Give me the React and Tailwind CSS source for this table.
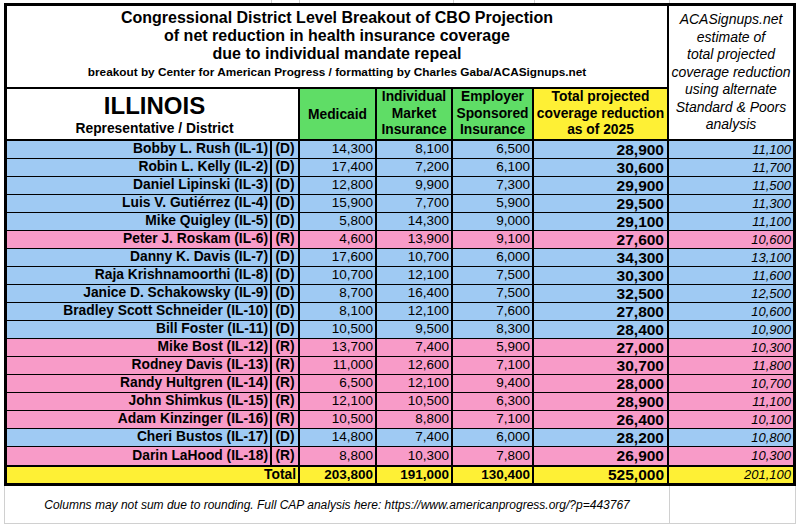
import React from "react";

const rows = [
  ["Bobby L. Rush (IL-1)", "D", "14,300", "8,100", "6,500", "28,900", "11,100"],
  ["Robin L. Kelly (IL-2)", "D", "17,400", "7,200", "6,100", "30,600", "11,700"],
  ["Daniel Lipinski (IL-3)", "D", "12,800", "9,900", "7,300", "29,900", "11,500"],
  ["Luis V. Gutiérrez (IL-4)", "D", "15,900", "7,700", "5,900", "29,500", "11,300"],
  ["Mike Quigley (IL-5)", "D", "5,800", "14,300", "9,000", "29,100", "11,100"],
  ["Peter J. Roskam (IL-6)", "R", "4,600", "13,900", "9,100", "27,600", "10,600"],
  ["Danny K. Davis (IL-7)", "D", "17,600", "10,700", "6,000", "34,300", "13,100"],
  ["Raja Krishnamoorthi (IL-8)", "D", "10,700", "12,100", "7,500", "30,300", "11,600"],
  ["Janice D. Schakowsky (IL-9)", "D", "8,700", "16,400", "7,500", "32,500", "12,500"],
  ["Bradley Scott Schneider (IL-10)", "D", "8,100", "12,100", "7,600", "27,800", "10,600"],
  ["Bill Foster (IL-11)", "D", "10,500", "9,500", "8,300", "28,400", "10,900"],
  ["Mike Bost (IL-12)", "R", "13,700", "7,400", "5,900", "27,000", "10,300"],
  ["Rodney Davis (IL-13)", "R", "11,000", "12,600", "7,100", "30,700", "11,800"],
  ["Randy Hultgren (IL-14)", "R", "6,500", "12,100", "9,400", "28,000", "10,700"],
  ["John Shimkus (IL-15)", "R", "12,100", "10,500", "6,300", "28,900", "11,100"],
  ["Adam Kinzinger (IL-16)", "R", "10,500", "8,800", "7,100", "26,400", "10,100"],
  ["Cheri Bustos (IL-17)", "D", "14,800", "7,400", "6,000", "28,200", "10,800"],
  ["Darin LaHood (IL-18)", "R", "8,800", "10,300", "7,800", "26,900", "10,300"],
];

function DataRow({ r, last }) {
  const bg = r[1] === "D" ? "bg-[#9fcaf3]" : "bg-[#f89bc8]";
  return (
    <div className={`flex h-[18px] ${last ? "h-[17px]" : "border-b border-black"} ${bg}`}>
      <div className="w-[265px] border-r-2 border-black flex items-center justify-end pr-[2px] font-bold text-[13.8px] whitespace-nowrap">
        {r[0]}
      </div>
      <div className="w-[28px] border-r-2 border-black flex items-center justify-center font-bold text-[13.8px]">
        ({r[1]})
      </div>
      <div className="w-[77px] border-r-2 border-black flex items-center justify-end pr-[2px] text-[13.5px]">
        {r[2]}
      </div>
      <div className="w-[76px] border-r-2 border-black flex items-center justify-end pr-[2px] text-[13.5px]">
        {r[3]}
      </div>
      <div className="w-[81px] border-r-2 border-black flex items-center justify-end pr-[2px] text-[13.5px]">
        {r[4]}
      </div>
      <div className="w-[135px] border-r-2 border-black flex items-center justify-end pr-[3px] font-bold text-[15.5px]">
        {r[5]}
      </div>
      <div className="flex-1 flex items-center justify-end pr-[2px] italic text-[13px]">
        {r[6]}
      </div>
    </div>
  );
}

export default function App() {
  return (
    <div className="w-[802px] h-[525px] bg-white text-black font-['Liberation_Sans',Arial,sans-serif] overflow-hidden">
      {/* top gridline strip */}
      <div className="flex h-[3px] ml-[4px] w-[792px]">
        <div className="w-[268px] border-r border-[#d0d0d0]" />
        <div className="w-[28px] border-r border-[#d0d0d0]" />
        <div className="w-[154px] border-r border-[#d0d0d0]" />
        <div className="w-[81px] border-r border-[#d0d0d0]" />
        <div className="w-[135px] border-r border-[#d0d0d0]" />
        <div className="flex-1" />
      </div>

      <div className="ml-[4px] w-[792px] border-[3px] border-black">
        {/* header block */}
        <div className="flex">
          <div className="w-[662px] flex flex-col">
            <div className="h-[83px] border-b-2 border-r-2 border-black flex flex-col items-center pt-[3px]">
              <div className="font-bold text-[16px] leading-[18px] text-center">
                <div>Congressional District Level Breakout of CBO Projection</div>
                <div>of net reduction in health insurance coverage</div>
                <div>due to individual mandate repeal</div>
              </div>
              <div className="font-bold text-[11.8px] leading-[14px] mt-[2px] text-center whitespace-nowrap">
                breakout by Center for American Progress / formatting by Charles Gaba/ACASignups.net
              </div>
            </div>
            <div className="h-[50px] flex">
              <div className="w-[293px] border-r-2 border-black flex flex-col items-center justify-center pl-[4px]">
                <div className="font-bold text-[24px] leading-[26px] pt-[2px]">ILLINOIS</div>
                <div className="font-bold text-[13.8px] leading-[16px] mt-[2px]">Representative / District</div>
              </div>
              <div className="w-[77px] border-r-2 border-black bg-[#5fdd66] flex items-center justify-center font-bold text-[13.8px] pt-[2px]">
                Medicaid
              </div>
              <div className="w-[76px] border-r-2 border-black bg-[#5fdd66] flex items-center justify-center text-center font-bold text-[13.8px] leading-[16.5px]">
                Individual<br />Market<br />Insurance
              </div>
              <div className="w-[81px] border-r-2 border-black bg-[#5fdd66] flex items-center justify-center text-center font-bold text-[13.8px] leading-[16.5px]">
                Employer<br />Sponsored<br />Insurance
              </div>
              <div className="w-[135px] border-r-2 border-black bg-[#fef035] flex items-center justify-center text-center font-bold text-[13.8px] leading-[16.5px] whitespace-nowrap">
                Total projected<br />coverage reduction<br />as of 2025
              </div>
            </div>
          </div>
          <div className="flex-1 h-[133px] flex items-center justify-center text-center italic text-[14px] leading-[17.5px] whitespace-nowrap">
            <div>
              ACASignups.net<br />estimate of<br />total projected<br />coverage reduction<br />using alternate<br />Standard &amp; Poors<br />analysis
            </div>
          </div>
        </div>

        {/* data */}
        <div className="border-t-2 border-black">
          {rows.map((r, i) => (
            <DataRow key={i} r={r} last={i === rows.length - 1} />
          ))}
        </div>

        {/* total */}
        <div className="flex h-[18px] border-t-2 border-black bg-[#fef035]">
          <div className="w-[293px] border-r-2 border-black flex items-center justify-end pr-[2px] font-bold text-[13.8px]">
            Total
          </div>
          <div className="w-[77px] border-r-2 border-black flex items-center justify-end pr-[2px] font-bold text-[13.5px]">
            203,800
          </div>
          <div className="w-[76px] border-r-2 border-black flex items-center justify-end pr-[2px] font-bold text-[13.5px]">
            191,000
          </div>
          <div className="w-[81px] border-r-2 border-black flex items-center justify-end pr-[2px] font-bold text-[13.5px]">
            130,400
          </div>
          <div className="w-[135px] border-r-2 border-black flex items-center justify-end pr-[3px] font-bold text-[15.5px]">
            525,000
          </div>
          <div className="flex-1 flex items-center justify-end pr-[2px] italic text-[13px]">
            201,100
          </div>
        </div>
      </div>

      {/* footer */}
      <div className="ml-[4px] w-[792px] h-[38px] flex border-l border-b border-[#d0d0d0]">
        <div className="w-[665px] border-r border-[#d0d0d0] flex items-center justify-center italic text-[12px] whitespace-nowrap pt-[1px]">
          Columns may not sum due to rounding. Full CAP analysis here: https://www.americanprogress.org/?p=443767
        </div>
        <div className="flex-1 border-r border-[#d0d0d0]" />
      </div>
    </div>
  );
}
